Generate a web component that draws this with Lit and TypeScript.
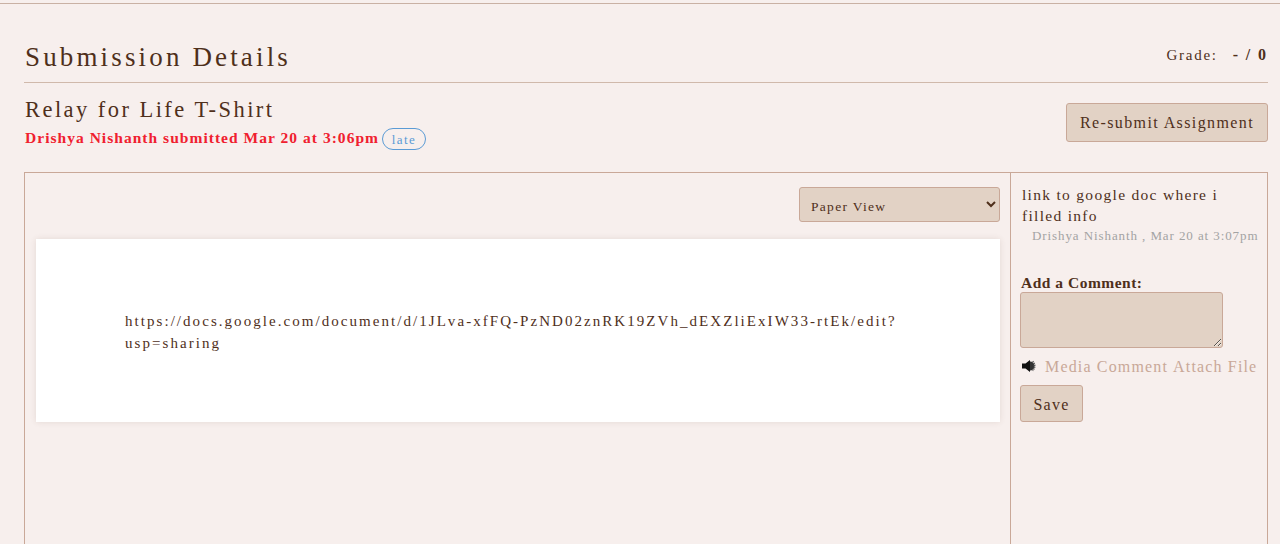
import { LitElement, html, css } from "lit";
import { customElement } from "lit/decorators.js";

@customElement("app-root")
export class AppRoot extends LitElement {
  static styles = css`
    :host {
      display: block;
      height: 544px;
      overflow: hidden;
      background: #f7efed;
      color: #4f2f1b;
      font-family: "Liberation Serif", serif;
      padding-top: 3px;
      box-sizing: border-box;
    }
    .page {
      border-top: 1px solid #c9b1a4;
      padding: 0 12px 0 24px;
    }
    .head {
      display: flex;
      justify-content: space-between;
      height: 79px;
      border-bottom: 1px solid #d0b9ab;
      box-sizing: border-box;
    }
    h1 {
      margin: 38px 0 0 1px;
      font-size: 27px;
      line-height: 30px;
      font-weight: 400;
      letter-spacing: 3.15px;
    }
    .grade {
      margin-top: 42px;
      font-size: 15px;
      line-height: 18px;
      letter-spacing: 1.73px;
      display: flex;
    }
    .grade b {
      margin-left: 15px;
      font-size: 16px;
      letter-spacing: 1.9px;
    }
    .sub {
      display: flex;
      justify-content: space-between;
      height: 89px;
      box-sizing: border-box;
    }
    h2 {
      margin: 15px 0 0 1px;
      font-size: 22.5px;
      line-height: 24px;
      font-weight: 400;
      letter-spacing: 2.45px;
    }
    .who {
      margin: 4px 0 0 1px;
      display: flex;
      align-items: center;
      font-size: 15.5px;
      line-height: 18px;
      font-weight: 700;
      letter-spacing: 1.03px;
      color: #f0202f;
    }
    .late {
      margin: 2px 0 0 3px;
      width: 44px;
      height: 22px;
      box-sizing: border-box;
      border: 1px solid #5b9bd5;
      border-radius: 11px;
      font-size: 13px;
      font-weight: 400;
      line-height: 22px;
      text-align: center;
      letter-spacing: 1.4px;
      color: #5b9bd5;
    }
    button,
    select,
    textarea {
      font-family: inherit;
      color: inherit;
      background: #e2d2c5;
      border: 1px solid #c9a898;
      border-radius: 3px;
      box-sizing: border-box;
      margin: 0;
    }
    .resubmit {
      margin-top: 20px;
      width: 202px;
      height: 39px;
      font-size: 16px;
      letter-spacing: 1.4px;
      padding: 1px 0 0;
    }
    .box {
      display: flex;
      height: 400px;
      border: 1px solid #c9a898;
      border-bottom: 0;
      box-sizing: border-box;
    }
    .main {
      width: 986px;
      box-sizing: border-box;
      border-right: 1px solid #c9a898;
      padding: 14px 10px 0 11px;
      display: flex;
      flex-direction: column;
      align-items: flex-end;
    }
    select {
      width: 201px;
      height: 35px;
      padding: 3px 0 0 7px;
      font-size: 13.5px;
      letter-spacing: 1.3px;
    }
    .paper {
      align-self: stretch;
      margin-top: 17px;
      height: 183px;
      background: #fff;
      box-shadow: 0 0 6px rgba(90, 60, 40, 0.12);
      padding: 71px 89px 0;
      box-sizing: border-box;
      font-size: 15px;
      line-height: 22px;
      letter-spacing: 2.05px;
    }
    .side {
      flex: 1;
      padding: 11px 0 0 9px;
      min-width: 0;
    }
    .msg {
      margin-left: 2px;
      width: 215px;
      font-size: 15.5px;
      line-height: 21px;
      letter-spacing: 1.3px;
    }
    .meta {
      margin: 2px 0 0 12px;
      font-size: 13px;
      line-height: 16px;
      letter-spacing: 0.91px;
      color: #a3a3a3;
      white-space: nowrap;
    }
    .label {
      display: block;
      margin: 30px 0 0 1px;
      font-size: 15.5px;
      line-height: 18px;
      font-weight: 700;
      letter-spacing: 0.5px;
    }
    textarea {
      display: block;
      width: 203px;
      height: 56px;
      padding: 0;
    }
    .links {
      display: flex;
      align-items: center;
      margin-top: 9px;
      height: 20px;
      font-size: 16px;
      letter-spacing: 1.16px;
      color: #c9a898;
      white-space: nowrap;
    }
    .links svg {
      margin: -3px 9px 0 2px;
      flex: none;
    }
    .links span + span {
      margin-left: 5px;
    }
    .save {
      display: block;
      margin-top: 8px;
      width: 63px;
      height: 37px;
      font-size: 16px;
      letter-spacing: 1.25px;
      padding: 2px 0 0;
    }
  `;

  render() {
    return html`
      <div class="page">
        <div class="head">
          <h1>Submission Details</h1>
          <div class="grade"><span>Grade:</span><b>- / 0</b></div>
        </div>
        <div class="sub">
          <div>
            <h2>Relay for Life T-Shirt</h2>
            <div class="who">
              <span>Drishya Nishanth submitted Mar 20 at 3:06pm</span>
              <span class="late">late</span>
            </div>
          </div>
          <button class="resubmit">Re-submit Assignment</button>
        </div>
        <div class="box">
          <div class="main">
            <select><option>Paper View</option></select>
            <div class="paper">
              https://docs.google.com/document/d/1JLva-xfFQ-PzND02znRK19ZVh_dEXZliExIW33-rtEk/edit?<wbr />usp=sharing
            </div>
          </div>
          <div class="side">
            <div class="msg">link to google doc where i filled info</div>
            <div class="meta">Drishya Nishanth , Mar 20 at 3:07pm</div>
            <label class="label">Add a Comment:</label>
            <textarea></textarea>
            <div class="links">
              <svg width="14" height="12" viewBox="0 0 14 12">
                <path d="M0 3.500h3.500L8 0v12L3.500 8.500H0z" fill="#111" />
                <path d="M8 1.500a4.500 4.500 0 0 1 0 9z" fill="#333" />
                <path d="M10.500 1.500c2.800 2.500 2.800 6.500 0 9" fill="none" stroke="#555" stroke-width="1.800" stroke-dasharray="1.200 .7" />
              </svg>
              <span>Media Comment</span><span>Attach File</span>
            </div>
            <button class="save">Save</button>
          </div>
        </div>
      </div>
    `;
  }
}
